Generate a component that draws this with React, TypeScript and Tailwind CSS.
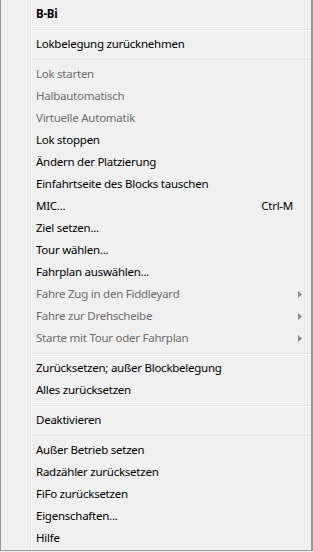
import React from 'react';

type Entry =
  | { kind: 'sep' }
  | { kind: 'item'; label: string; disabled?: boolean; bold?: boolean; shortcut?: string; submenu?: boolean };

const entries: Entry[] = [
  { kind: 'item', label: 'B-Bi', bold: true },
  { kind: 'sep' },
  { kind: 'item', label: 'Lokbelegung zurücknehmen' },
  { kind: 'sep' },
  { kind: 'item', label: 'Lok starten', disabled: true },
  { kind: 'item', label: 'Halbautomatisch', disabled: true },
  { kind: 'item', label: 'Virtuelle Automatik', disabled: true },
  { kind: 'item', label: 'Lok stoppen' },
  { kind: 'item', label: 'Ändern der Platzierung' },
  { kind: 'item', label: 'Einfahrtseite des Blocks tauschen' },
  { kind: 'item', label: 'MIC...', shortcut: 'Ctrl-M' },
  { kind: 'item', label: 'Ziel setzen...' },
  { kind: 'item', label: 'Tour wählen...' },
  { kind: 'item', label: 'Fahrplan auswählen...' },
  { kind: 'item', label: 'Fahre Zug in den Fiddleyard', disabled: true, submenu: true },
  { kind: 'item', label: 'Fahre zur Drehscheibe', disabled: true, submenu: true },
  { kind: 'item', label: 'Starte mit Tour oder Fahrplan', disabled: true, submenu: true },
  { kind: 'sep' },
  { kind: 'item', label: 'Zurücksetzen; außer Blockbelegung' },
  { kind: 'item', label: 'Alles zurücksetzen' },
  { kind: 'sep' },
  { kind: 'item', label: 'Deaktivieren' },
  { kind: 'sep' },
  { kind: 'item', label: 'Außer Betrieb setzen' },
  { kind: 'item', label: 'Radzähler zurücksetzen' },
  { kind: 'item', label: 'FiFo zurücksetzen' },
  { kind: 'item', label: 'Eigenschaften...' },
  { kind: 'item', label: 'Hilfe' },
];

const Arrow = () => (
  <svg width="4" height="7" viewBox="0 0 4 7" className="block">
    <path d="M0 0 L4 3.5 L0 7 Z" fill="#8a8a8a" />
  </svg>
);

export default function App() {
  return (
    <div className="w-[313px] h-[552px] bg-[#f0f0f0]">
      <div
        className="w-[313px] h-[551px] flex bg-[#f0f0f0] border-l border-r-2 border-b border-[#979797] text-[11.5px] tracking-[-0.25px] leading-none"
        style={{ fontFamily: '"Noto Sans", "Segoe UI", sans-serif' }}
      >
        <div className="w-[29px] shrink-0" />
        <div className="flex-1 flex flex-col pt-[3px] border-l border-[#e2e3e3] shadow-[inset_1px_0_0_#ffffff]">
          {entries.map((e, i) =>
            e.kind === 'sep' ? (
              <div key={i} className="h-[8px] flex flex-col pt-[4px] pl-[1px]">
                <div className="h-px bg-[#e0e0e0]" />
                <div className="h-px bg-white" />
              </div>
            ) : (
              <div
                key={i}
                className={`h-[22px] flex items-center pl-[5px] pr-[9px] ${
                  e.disabled ? 'text-[#6d6d6d]' : 'text-black'
                } ${e.bold ? 'font-bold' : ''}`}
              >
                <span className="flex-1 whitespace-nowrap">{e.label}</span>
                {e.shortcut && <span className="mr-[9px]">{e.shortcut}</span>}
                {e.submenu && <Arrow />}
              </div>
            )
          )}
        </div>
      </div>
    </div>
  );
}
